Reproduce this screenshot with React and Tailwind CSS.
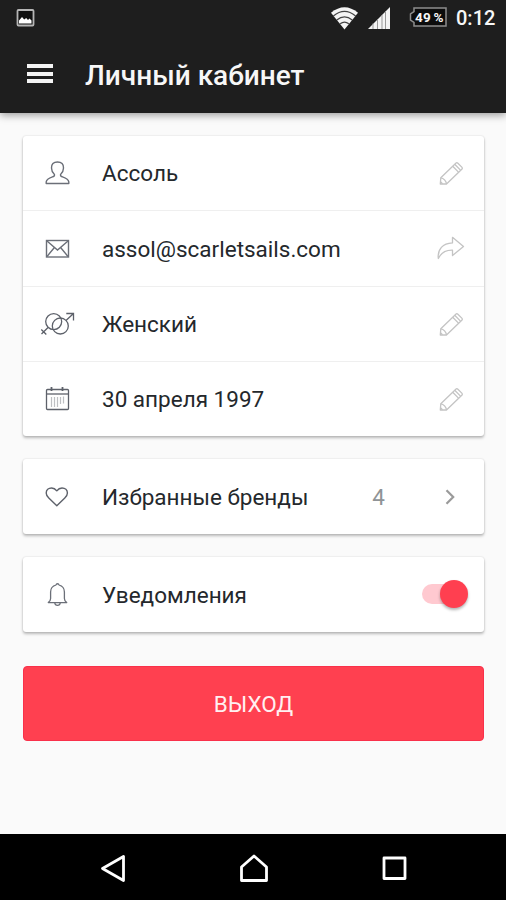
import React from 'react';

const PersonIcon = () => (
    <svg className="w-9 h-9 shrink-0 text-[#6b6f78]" viewBox="0 0 36 36" fill="none" stroke="currentColor" strokeWidth="1.4" strokeLinejoin="round">
        <path d="M18.500 6c-4 0-6.200 2.200-6 6 .1 2.700.9 4.600 2.600 6.100.8.800.4 2-.8 2.400-3.800 1.400-6.700 2.200-7.100 5.400V27.500h22.600V25.900c-.4-3.200-3.300-4-7.100-5.400-1.200-.4-1.600-1.600-.8-2.400 1.700-1.500 2.500-3.400 2.600-6.100.2-3.800-2-6-6-6z" />
    </svg>
);

const MailIcon = () => (
    <svg className="w-9 h-9 shrink-0 text-[#6b6f78]" viewBox="0 0 36 36" fill="none" stroke="currentColor" strokeWidth="1.4">
        <rect x="7.500" y="9.500" width="22" height="16.500" />
        <path d="M8 10l10.500 9L29 10M8 25.500l7.200-8.800M29 25.500l-7.200-8.800" />
    </svg>
);

const GenderIcon = () => (
    <svg className="w-9 h-9 shrink-0 text-[#5d616a]" viewBox="0 0 36 36" fill="none" stroke="currentColor" strokeWidth="1.3">
        <circle cx="14.700" cy="14.600" r="8" />
        <circle cx="21.300" cy="19" r="8" />
        <path d="M9 20.500L2.500 27M2.300 22.500l5 5M27 13.500L34.500 6.500M27.300 6.500H34.500V13.500" />
    </svg>
);

const CalendarIcon = () => (
    <svg className="w-9 h-9 shrink-0 text-[#5d616a]" viewBox="0 0 36 36" fill="none" stroke="currentColor" strokeWidth="1.3">
        <rect x="7.500" y="7.500" width="22" height="20" rx="1" />
        <path d="M7.500 12h22" />
        <path d="M12.500 5v4M23.500 5v4" strokeWidth="1.800" />
        <path d="M12.500 15v10M15.500 15v10M18.500 15v10M21.500 15v7M24.500 14.500v7" strokeWidth="1.200" opacity="0.4" />
    </svg>
);

const HeartIcon = () => (
    <svg className="w-9 h-9 shrink-0 text-[#5d616a]" viewBox="0 0 36 36" fill="none" stroke="currentColor" strokeWidth="1.400" strokeLinejoin="round">
        <path d="M17.800 10.800c-1.600-2.100-3.200-2.800-5.200-2.800-3.100 0-5.400 2-5.400 5 0 2.200 1 3.600 2.600 5.100l8 7.600 8-7.600c1.600-1.500 2.600-2.900 2.600-5.100 0-3-2.300-5-5.400-5-2 0-3.600.7-5.200 2.800z" />
    </svg>
);

const BellIcon = () => (
    <svg className="w-9 h-9 shrink-0 text-[#6b6f78]" viewBox="0 0 36 36" fill="none" stroke="currentColor" strokeWidth="1.300" strokeLinejoin="round">
        <path d="M17 7c.3-1.700 2.700-1.700 3 0 3.500 1 5.400 3.400 5.400 7v6.500c0 1.800.9 3 2.300 4.100H9.300c1.400-1.100 2.300-2.300 2.300-4.100V14c0-3.600 1.900-6 5.400-7z" />
        <path d="M15.800 25c.3 3.200 5.100 3.200 5.400 0" />
    </svg>
);

const PencilIcon = () => (
    <svg className="w-9 h-9 shrink-0 text-[#c4c4c4]" viewBox="0 0 36 36" fill="none" stroke="currentColor" strokeWidth="1.300" strokeLinejoin="round">
        <path d="M7.300 28l.5-6.200L22.800 7.200c.7-.7 1.400-.7 2.100 0l3.900 3.900c.7.700.7 1.400 0 2.100L13.500 28z" />
        <path d="M7.800 21.800c2.900.2 5.300 3.200 5.700 6.200M19.700 10.200l5.800 5.900M21.700 8.200l5.800 5.900M7.500 25.800l2 2" />
    </svg>
);

const ShareIcon = () => (
    <svg className="w-9 h-9 shrink-0 text-[#c4c4c4]" viewBox="0 0 36 36" fill="none" stroke="currentColor" strokeWidth="1.300" strokeLinejoin="round">
        <path d="M19.500 6.300L30.500 15.500l-11 9v-5.300c-6.500-.2-11 1.800-14.200 8.300-1-9.200 4.500-15.200 14.200-15.600z" />
    </svg>
);

const ChevronIcon = () => (
    <svg className="w-9 h-9 shrink-0 text-[#9a9a9a]" viewBox="0 0 36 36" fill="none" stroke="currentColor" strokeWidth="2.200">
        <path d="M13.500 10.300l6.700 6.700-6.700 6.700" />
    </svg>
);

const StatusBar = () => (
    <div className="flex h-9 items-center justify-between pl-4 pr-[11px]">
        <svg className="w-[19px] h-[18px]" viewBox="0 0 19 18">
            <rect x="1.500" y="1" width="16" height="15.500" rx="1" fill="#111" stroke="#b5b5b5" strokeWidth="1.800" />
            <path d="M3 14.500V11.500l3-3.500 2.200 2.500 2-1.500 1.800 2 1.500-1.500 2 2v3z" fill="#fff" />
        </svg>
        <div className="flex items-center">
            <svg className="w-[29px] h-6" viewBox="0 0 30 24" fill="none">
                <path d="M1 6.500Q15-5 29 6.500L15 24z" fill="#f4f4f4" />
                <path d="M3.500 10Q15 .5 26.500 10M7 14Q15 7.500 23 14M10.500 18Q15 14.500 19.500 18" stroke="#444" strokeWidth="1.300" />
            </svg>
            <svg className="ml-[9px] w-[22px] h-[22px]" viewBox="0 0 22 22">
                <path d="M0 22L22 0v22z" fill="#f4f4f4" />
                <path d="M5 16.500V22M9.500 12V22M14 8v14M17.500 4v18" stroke="#999" strokeWidth="1" />
            </svg>
            <div className="relative mb-[2px] ml-[19px] h-5 w-[38px]">
                <svg className="absolute inset-0" width="38" height="20" viewBox="0 0 38 20">
                    <path d="M5 1h32v18H5v-3.500L1.500 13V7L5 4.500z" fill="#0c0c0c" stroke="#8d8d8d" strokeWidth="1.500" />
                </svg>
                <span className="absolute left-[6px] top-0 text-[13.500px] leading-5 font-bold tracking-[0.2px] whitespace-nowrap [word-spacing:-1px]">49 %</span>
            </div>
            <span className="ml-[9px] w-[39px] text-[20px] leading-6 font-medium">0:12</span>
        </div>
    </div>
);

const Header = () => (
    <header className="relative h-[113px] shrink-0 bg-[#1e1e1e] text-[#f7f7f7] shadow-[0_2px_8px_rgba(0,0,0,0.4)]">
        <StatusBar />
        <div className="flex h-[77px] items-center pl-[27px]">
            <div className="mb-[2px] flex w-[26px] flex-col gap-[3.500px]">
                <div className="h-1 bg-[#f4f4f4]" />
                <div className="h-1 bg-[#f4f4f4]" />
                <div className="h-1 bg-[#f4f4f4]" />
            </div>
            <h1 className="ml-8 pt-[2px] text-[28px] font-medium whitespace-nowrap">Личный кабинет</h1>
        </div>
    </header>
);

const Card = ({ className = '', children }) => (
    <div className={`flex flex-col rounded-[3px] bg-white shadow-[0_2px_3px_rgba(0,0,0,0.26),0_0_2px_rgba(0,0,0,0.14)] divide-y divide-[#efefef] ${className}`}>
        {children}
    </div>
);

const Row = ({ icon, label, children }) => (
    <div className="flex flex-1 items-center pl-4 pr-[15px] pt-[2px]">
        {icon}
        <span className="ml-[27px] flex-1 text-[22.500px] whitespace-nowrap text-[#24282c]">{label}</span>
        {children}
    </div>
);

const Toggle = () => (
    <div className="relative mr-px mb-[3px] h-7 w-[46px]">
        <div className="absolute left-0 top-1 h-5 w-10 rounded-full bg-[#ffc9d0]" />
        <div className="absolute right-0 top-0 size-7 rounded-full bg-[#ff3f50] shadow-[0_2px_3px_rgba(0,0,0,0.3)]" />
    </div>
);

const NavBar = () => (
    <nav className="flex h-[66px] shrink-0 items-center justify-between bg-black pl-[98px] pr-[97px] pt-1">
        <svg className="w-7 h-8" viewBox="0 0 28 32" fill="none" stroke="#fff" strokeWidth="2.800" strokeLinejoin="round">
            <path d="M25.500 3.500v24L4.500 15.500z" />
        </svg>
        <svg className="w-8 h-8" viewBox="0 0 32 32" fill="none" stroke="#fff" strokeWidth="2.800" strokeLinejoin="round">
            <path d="M3.500 27.500V14L16 3l12.500 11v13.500z" />
        </svg>
        <svg className="w-7 h-8" viewBox="0 0 28 32" fill="none" stroke="#fff" strokeWidth="2.800" strokeLinejoin="round">
            <rect x="3" y="5" width="21" height="20.500" />
        </svg>
    </nav>
);

const App = () => {
    return (
        <div className="flex h-[900px] w-[506px] flex-col overflow-hidden bg-[#fafafa] font-['Roboto',sans-serif]">
            <Header />
            <main className="flex flex-1 flex-col pl-[23px] pr-[22px] pt-[23px]">
                <Card className="h-[300px]">
                    <Row icon={<PersonIcon />} label="Ассоль"><PencilIcon /></Row>
                    <Row icon={<MailIcon />} label="assol@scarletsails.com"><ShareIcon /></Row>
                    <Row icon={<GenderIcon />} label="Женский"><PencilIcon /></Row>
                    <Row icon={<CalendarIcon />} label="30 апреля 1997"><PencilIcon /></Row>
                </Card>
                <Card className="mt-[23px] h-[75px]">
                    <Row icon={<HeartIcon />} label="Избранные бренды">
                        <span className="mr-[48px] text-[22.500px] text-[#8f9396]">4</span>
                        <ChevronIcon />
                    </Row>
                </Card>
                <Card className="mt-[23px] h-[75px]">
                    <Row icon={<BellIcon />} label="Уведомления"><Toggle /></Row>
                </Card>
                <button className="mt-[34px] h-[75px] rounded-[4px] border border-[#f9304a] bg-[#ff4050] pt-[2px] text-[22.500px] text-[#fff0f1]">
                    ВЫХОД
                </button>
            </main>
            <NavBar />
        </div>
    );
};

export default App;
